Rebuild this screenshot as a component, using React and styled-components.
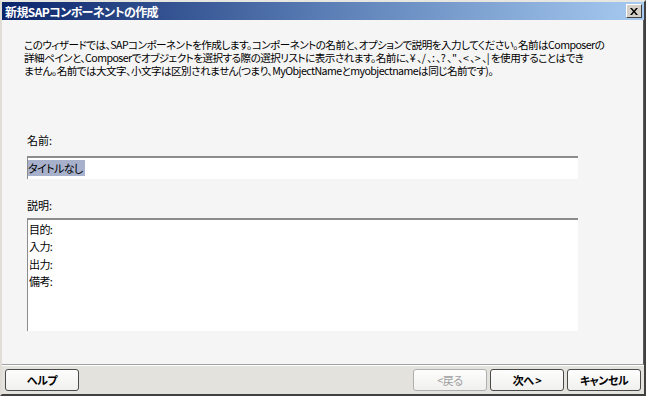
import React from 'react';
import { styled, createGlobalStyle } from 'styled-components';

const Global = createGlobalStyle`
  body {
    margin: 0;
    background: #d4d0c8;
    font-family: "Noto Sans CJK JP", "Liberation Sans", sans-serif;
  }
`;

const Window = styled.div`
  box-sizing: border-box;
  width: 646px;
  height: 396px;
  display: flex;
  flex-direction: column;
  background: #d4d0c8;
  border-top: 2px solid #e8e6e0;
  border-left: 2px solid #e0ddd6;
  border-right: 2px solid #404040;
  border-bottom: 2px solid #404040;
`;

const TitleBar = styled.div`
  height: 18px;
  display: flex;
  align-items: center;
  justify-content: space-between;
  padding: 0 2px 0 3px;
  background: linear-gradient(to right, #0a246a, #5a7db5 50%, #a6caf0);
`;

const Title = styled.span`
  color: #fff;
  font-weight: bold;
  font-size: 12px;
  letter-spacing: -0.6px;
  font-feature-settings: 'palt';
`;

const CloseButton = styled.div`
  box-sizing: border-box;
  width: 16px;
  height: 14px;
  display: flex;
  align-items: center;
  justify-content: center;
  background: #d4d0c8;
  border-top: 1px solid #fff;
  border-left: 1px solid #fff;
  border-right: 1px solid #404040;
  border-bottom: 1px solid #404040;
`;

const Body = styled.div`
  flex: 1;
  background: #f5f5f5;
  border-right: 1px solid #5a5a5a;
  border-bottom: 1px solid #a0a0a0;
  padding: 18px 0 0 22px;
  display: flex;
  flex-direction: column;
`;

const Intro = styled.div`
  font-size: 10.6px;
  line-height: 13px;
  color: #000;
  letter-spacing: -0.55px;
  font-feature-settings: 'palt';
  padding-right: 10px;
`;

const Line = styled.div`
  white-space: nowrap;
`;

const Label = styled.div`
  font-size: 11px;
  line-height: 13px;
  color: #000;
  margin: ${(p) => p.$top}px 0 ${(p) => p.$gap}px 3px;
`;

const Field = styled.div`
  box-sizing: border-box;
  margin-left: 3px;
  width: 551px;
  height: ${(p) => p.$height}px;
  background: #fff;
  border-top: 2px solid #8c8c8c;
  border-left: 1px solid #8c8c8c;
  font-size: 11px;
  color: #000;
  letter-spacing: -0.6px;
  font-feature-settings: 'palt';
  padding: ${(p) => (p.$multi ? '1px 0 0 1px' : '1px 0 0 0')};
  line-height: ${(p) => (p.$multi ? '17.3px' : '19px')};
`;

const Selected = styled.span`
  background: #a8b1cc;
  padding-right: 2px;
`;

const Footer = styled.div`
  height: 28px;
  background: #e4e2dc;
  display: flex;
  align-items: center;
  padding: 0 3px;
  gap: 3px;
  border-top: 1px solid #fff;
`;

const Button = styled.div`
  box-sizing: border-box;
  width: 74px;
  height: 22px;
  border: 1px solid ${(p) => (p.$disabled ? '#b0b0b0' : '#4a4a4a')};
  border-radius: 3px;
  background: linear-gradient(#fdfdfd, #f0f0ee);
  display: flex;
  align-items: center;
  justify-content: center;
  font-size: 11px;
  font-weight: ${(p) => (p.$disabled ? 'normal' : 'bold')};
  color: ${(p) => (p.$disabled ? '#a0a0a0' : '#000')};
  letter-spacing: -0.5px;
  font-feature-settings: 'palt';
`;

const Spacer = styled.div`
  flex: 1;
`;

export default function App() {
  return (
    <>
      <Global />
      <Window>
        <TitleBar>
          <Title>新規SAPコンポーネントの作成</Title>
          <CloseButton>
            <svg width="8" height="7" viewBox="0 0 8 7">
              <path d="M0 0h2l2 2.5L6 0h2L5 3.5 8 7H6L4 4.5 2 7H0l3-3.5z" fill="#000" />
            </svg>
          </CloseButton>
        </TitleBar>
        <Body>
          <Intro>
            <Line>このウィザードでは、SAPコンポーネントを作成します。コンポーネントの名前と、オプションで説明を入力してください。名前はComposerの</Line>
            <Line>詳細ペインと、Composerでオブジェクトを選択する際の選択リストに表示されます。名前に、¥ 、/ 、: 、? 、" 、&lt; 、&gt; 、| を使用することはでき</Line>
            <Line>ません。名前では大文字、小文字は区別されません(つまり、MyObjectNameとmyobjectnameは同じ名前です)。</Line>
          </Intro>
          <Label $top={57} $gap={9}>名前:</Label>
          <Field $height={23}>
            <Selected>タイトルなし</Selected>
          </Field>
          <Label $top={20} $gap={6}>説明:</Label>
          <Field $height={113} $multi>
            <div>目的:</div>
            <div>入力:</div>
            <div>出力:</div>
            <div>備考:</div>
          </Field>
        </Body>
        <Footer>
          <Button>ヘルプ</Button>
          <Spacer />
          <Button $disabled>&lt;戻る</Button>
          <Button>次へ &gt;</Button>
          <Button>キャンセル</Button>
        </Footer>
      </Window>
    </>
  );
}
